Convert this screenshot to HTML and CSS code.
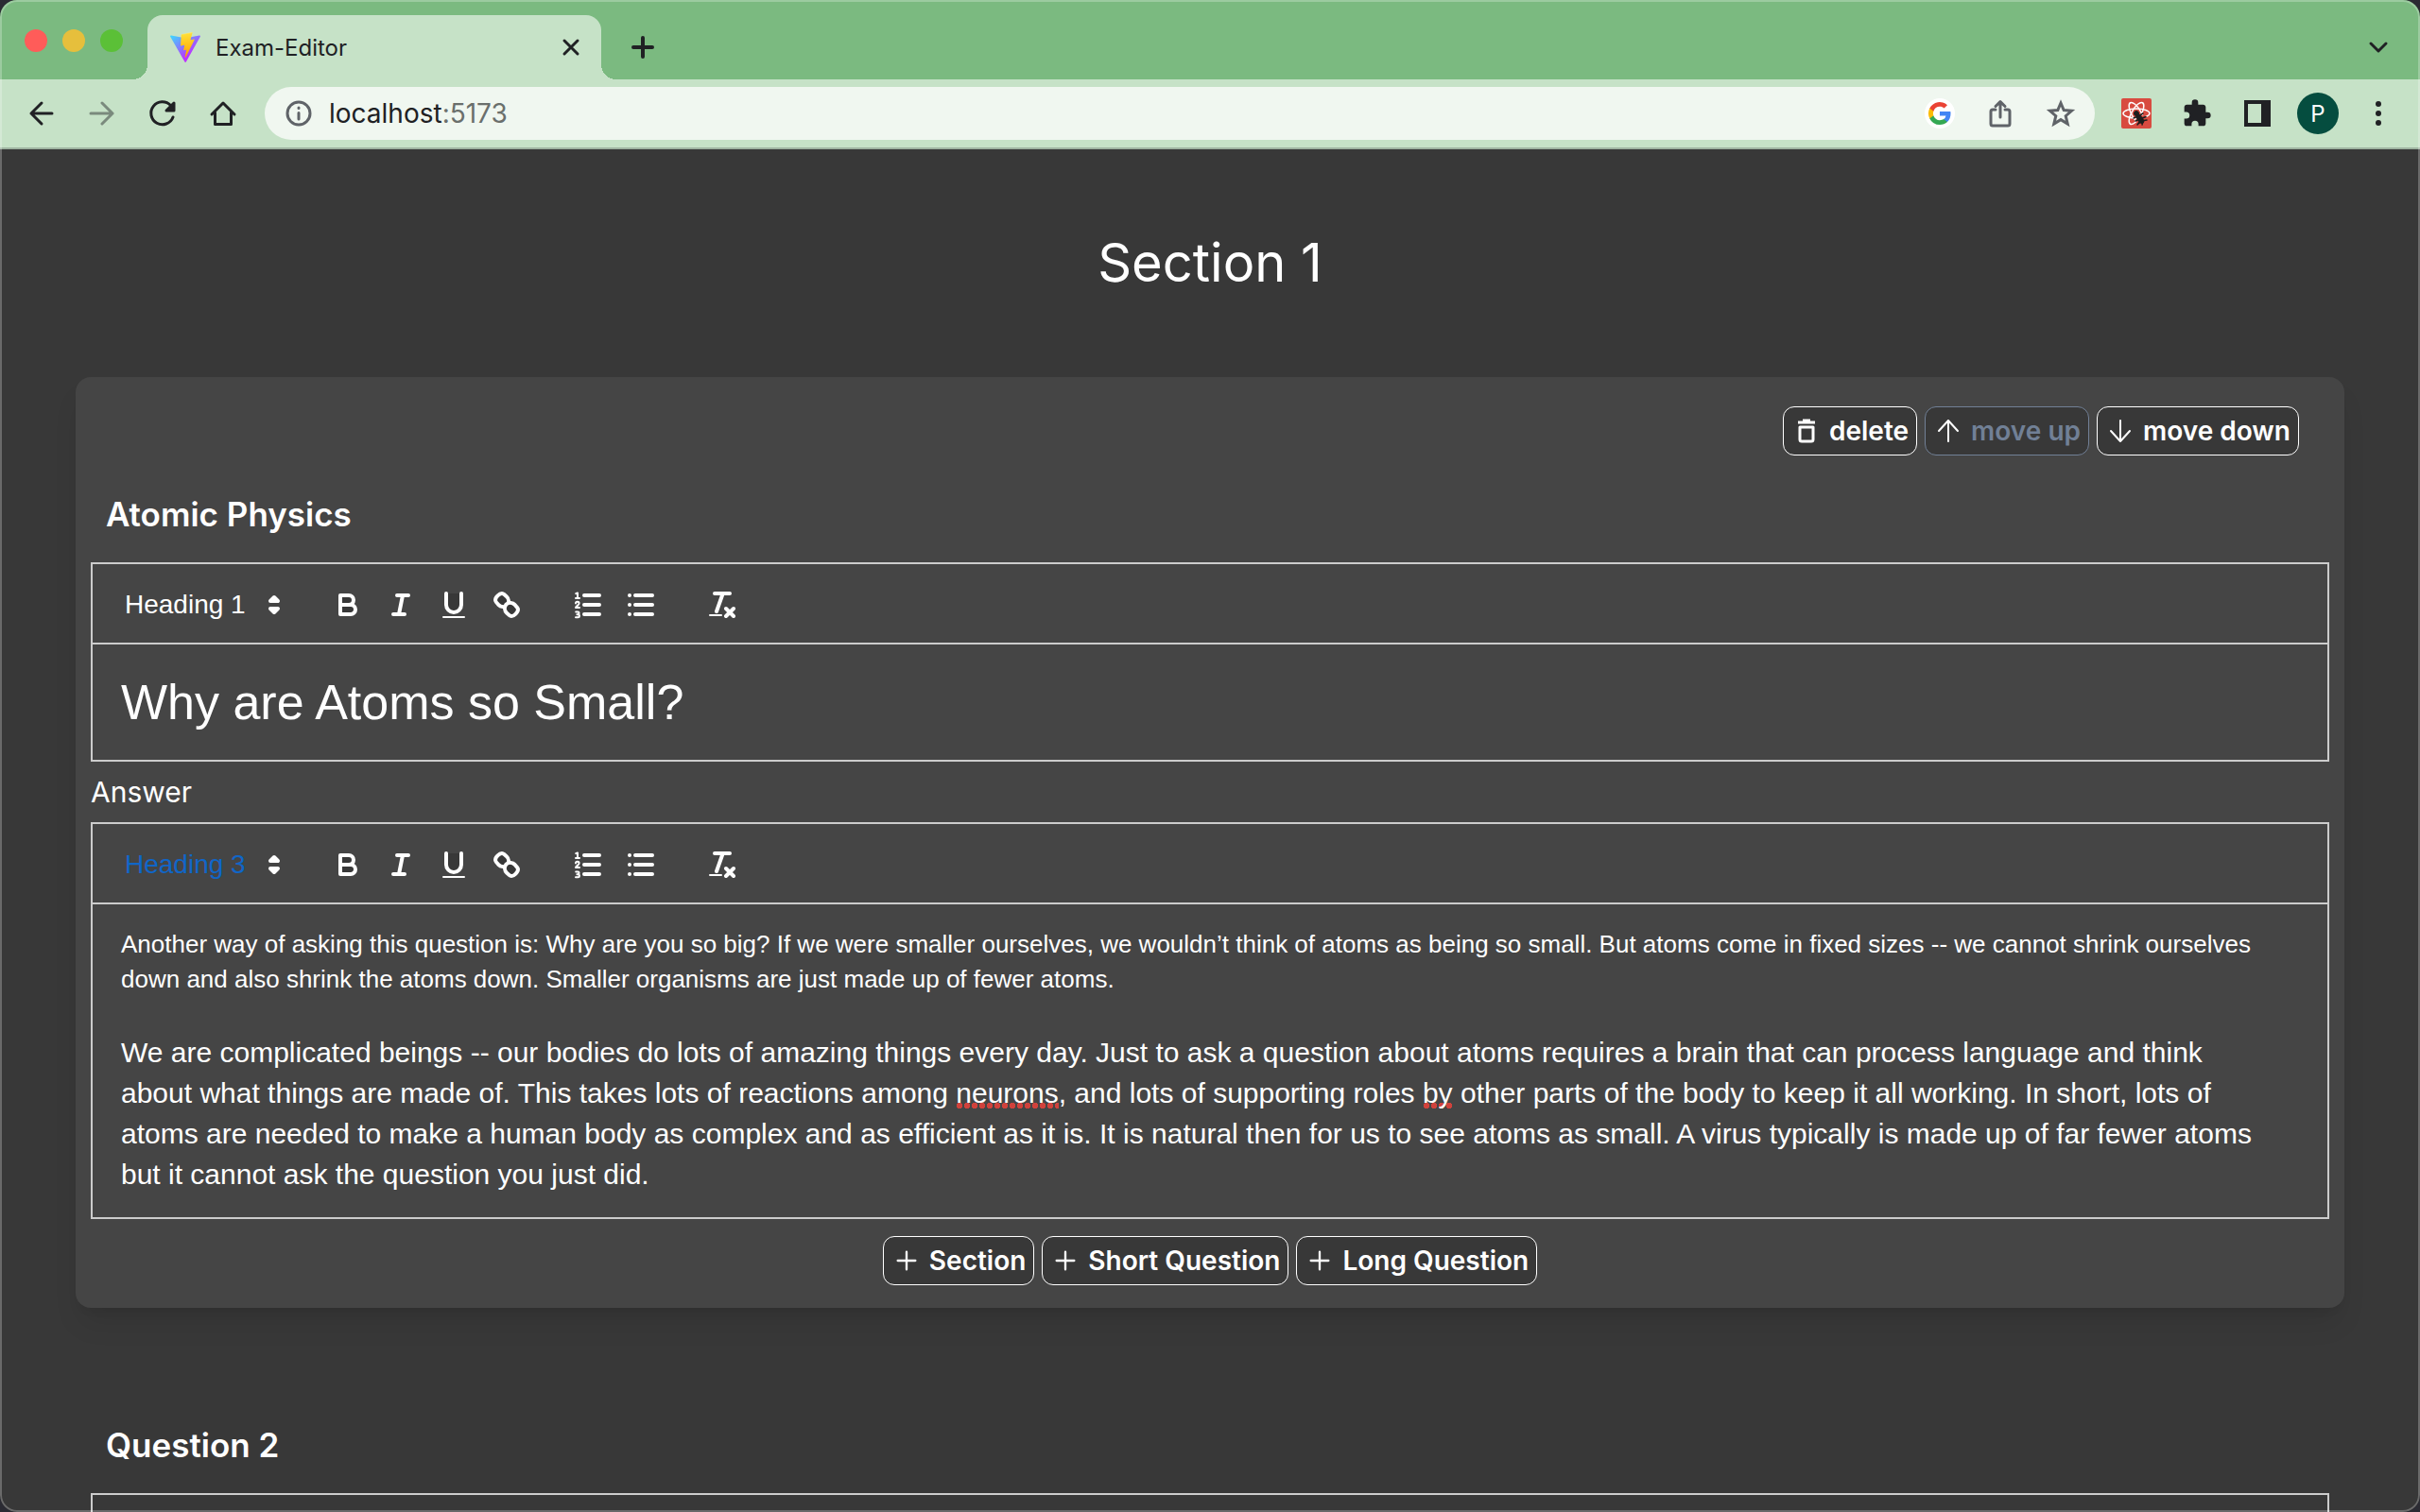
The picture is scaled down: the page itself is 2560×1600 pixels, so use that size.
FILE: index.html
```html
<!DOCTYPE html>
<html lang="en">
<head>
<meta charset="utf-8">
<title>Exam-Editor</title>
<link rel="stylesheet" href="styles.css">
</head>
<body>
<svg class="sprite" aria-hidden="true">
  <symbol id="i-bold" viewBox="0 0 18 18"><path class="dark" d="M5,4H9.5A2.5,2.5,0,0,1,12,6.5v0A2.5,2.5,0,0,1,9.5,9H5A0,0,0,0,1,5,9V4A0,0,0,0,1,5,4Z"/><path class="dark" d="M5,9h5.5A2.5,2.5,0,0,1,13,11.5v0A2.5,2.5,0,0,1,10.5,14H5a0,0,0,0,1,0,0V9A0,0,0,0,1,5,9Z"/></symbol>
  <symbol id="i-italic" viewBox="0 0 18 18"><path d="M7 4H13M5 14H11M8 14L10 4"/></symbol>
  <symbol id="i-underline" viewBox="0 0 18 18"><path class="dark" d="M5,3V9a4.012,4.012,0,0,0,4,4H9a4.012,4.012,0,0,0,4-4V3"/><rect class="bar" height="1" rx=".5" width="12" x="3" y="15"/></symbol>
  <symbol id="i-link" viewBox="0 0 18 18"><path d="M7 7L11 11"/><path class="dark" d="M8.9,4.577a3.476,3.476,0,0,1,.36,4.679A3.476,3.476,0,0,1,4.577,8.9C3.185,7.5,2.035,6.4,4.217,4.217S7.5,3.185,8.9,4.577Z"/><path class="dark" d="M13.423,9.1a3.476,3.476,0,0,0-4.679-.36,3.476,3.476,0,0,0,.36,4.679c1.392,1.392,2.5,2.542,4.679.36S14.815,10.5,13.423,9.1Z"/></symbol>
  <symbol id="i-ol" viewBox="0 0 18 18"><path d="M7 4H15M7 9H15M7 14H15"/><path class="thin" d="M2.5,5.5h2M3.5,5.5V2.7L2.6,3.1M4.5,10.5h-2c0-.6,1.8-1.4,1.8-2.2A.8.8,0,0,0,2.5,8.2M2.6,12.7h1a.7.7,0,0,1,0,1.4H3.2h.5a.7.7,0,0,1,0,1.5H2.5"/></symbol>
  <symbol id="i-ul" viewBox="0 0 18 18"><path d="M6 4H15M6 9H15M6 14H15M3 4H3M3 9H3M3 14H3"/></symbol>
  <symbol id="i-clean" viewBox="0 0 18 18"><path d="M5 3H13M6 12.500L9.350 3M11 11L15 15M15 11L11 15"/><rect class="bar" height="1" rx=".5" width="7" x="2" y="14"/></symbol>
  <symbol id="i-plus" viewBox="0 0 24 24"><path d="M12 4V20M4 12H20"/></symbol>
</svg>

<header class="browser">
  <div class="tabs">
    <div class="lights"><i class="red"></i><i class="yellow"></i><i class="green"></i></div>
    <div class="tab">
      <svg class="vite" viewBox="0 0 256 257"><defs><linearGradient id="va" x1="0" x2=".578" y1=".076" y2=".787"><stop offset="0" stop-color="#41D1FF"/><stop offset="1" stop-color="#BD34FE"/></linearGradient><linearGradient id="vb" x1=".434" x2=".503" y1=".022" y2=".89"><stop offset="0" stop-color="#FFEA83"/><stop offset=".083" stop-color="#FFDD35"/><stop offset="1" stop-color="#FFA800"/></linearGradient></defs><path fill="url(#va)" d="M255.153 37.938L134.897 252.976c-2.483 4.44-8.862 4.466-11.382.048L.875 37.958c-2.746-4.814 1.371-10.646 6.827-9.67l120.385 21.517a6.537 6.537 0 0 0 2.322-.004l117.867-21.483c5.438-.991 9.574 4.796 6.877 9.62Z"/><path fill="url(#vb)" d="M185.432.063L96.44 17.501a3.268 3.268 0 0 0-2.634 3.014l-5.474 92.456a3.268 3.268 0 0 0 3.997 3.378l24.777-5.718c2.318-.535 4.413 1.507 3.936 3.838l-7.361 36.047c-.495 2.426 1.782 4.5 4.151 3.78l15.304-4.649c2.372-.72 4.652 1.36 4.15 3.788l-11.698 56.621c-.732 3.542 3.979 5.473 5.943 2.437l1.313-2.028l72.516-144.72c1.215-2.423-.88-5.186-3.54-4.672l-25.505 4.922c-2.396.462-4.435-1.77-3.759-4.114l16.646-57.705c.677-2.35-1.37-4.583-3.769-4.113Z"/></svg>
      <span class="tab-title">Exam-Editor</span>
      <button class="bare" aria-label="Close tab"><svg class="s20 ink w3" viewBox="0 0 20 20"><path d="M3 3L17 17M17 3L3 17"/></svg></button>
    </div>
    <button class="bare new-tab" aria-label="New tab"><svg class="s28 ink w4" viewBox="0 0 28 28"><path d="M14 4V24M4 14H24"/></svg></button>
    <button class="bare search-tabs" aria-label="Search tabs"><svg class="s28 ink w3" viewBox="0 0 28 28"><path d="M6 10L14 18L22 10"/></svg></button>
  </div>
  <div class="nav">
    <div class="nav-buttons">
      <button class="bare" aria-label="Back"><svg class="s32 ink w3" viewBox="0 0 32 32"><path d="M27 16H5M16 5L5 16L16 27"/></svg></button>
      <button class="bare faded" aria-label="Forward"><svg class="s32 ink w3" viewBox="0 0 32 32"><path d="M4 16H27M16 5L27 16L16 27"/></svg></button>
      <button class="bare" aria-label="Reload"><svg class="s32 ink w3" viewBox="0 0 32 32"><path d="M27 20A12 12 0 1 1 24.500 7.500"/><path class="solid" d="M28 5V13H20Z"/></svg></button>
      <button class="bare" aria-label="Home"><svg class="s32 ink w3" viewBox="0 0 32 32"><path d="M4 17L16 5L28 17M7.500 15V27.500H24.500V15"/></svg></button>
    </div>
    <div class="omnibox">
      <svg class="s32 grey w3" viewBox="0 0 32 32"><circle cx="16" cy="16" r="12"/><path d="M16 15.500V22M16 10V10.500"/></svg>
      <span class="url">localhost<span class="port">:5173</span></span>
      <svg class="s32" viewBox="0 0 32 32"><circle cx="16" cy="16" r="16" fill="#fff"/><g transform="translate(4 4)"><path fill="#4285F4" d="M23.500 12.300c0-.8-.1-1.600-.2-2.300H12v4.500h6.500a5.500 5.500 0 0 1-2.400 3.600v3h3.900c2.300-2.100 3.500-5.200 3.500-8.800z"/><path fill="#34A853" d="M12 24c3.200 0 6-1.100 8-2.900l-3.900-3c-1.100.7-2.500 1.200-4.100 1.200-3.100 0-5.800-2.100-6.700-5H1.300v3.100A12 12 0 0 0 12 24z"/><path fill="#FBBC05" d="M5.300 14.300a7.200 7.200 0 0 1 0-4.600V6.600H1.300a12 12 0 0 0 0 10.800l4-3.100z"/><path fill="#EA4335" d="M12 4.800c1.800 0 3.300.6 4.600 1.800l3.400-3.400A12 12 0 0 0 1.300 6.600l4 3.100c.9-2.900 3.600-4.900 6.700-4.900z"/></g></svg>
      <svg class="s32 grey w3" viewBox="0 0 32 32"><path d="M11 12H8Q6 12 6 14V27Q6 29 8 29H24Q26 29 26 27V14Q26 12 24 12H21M16 20V4M11 8.500L16 3.500L21 8.500"/></svg>
      <svg class="s32 grey w3" viewBox="0 0 32 32"><path class="miter" d="M16 5L19.200 12.600L27.500 13.300L21.200 18.700L23.200 27L16 22.600L8.800 27L10.800 18.700L4.500 13.300L12.800 12.600Z"/></svg>
    </div>
    <div class="extensions">
      <svg class="s32" viewBox="0 0 32 32"><rect width="32" height="32" rx="2" fill="#d84b40"/><g fill="none" stroke="#fff" stroke-width="1.500"><ellipse cx="16" cy="16" rx="14" ry="5"/><ellipse cx="16" cy="16" rx="13" ry="5" transform="rotate(60 16 16)"/><ellipse cx="16" cy="16" rx="13" ry="5" transform="rotate(120 16 16)"/></g><circle cx="22" cy="24" r="6" fill="#d84b40"/><g fill="#1d1d1d" stroke="#1d1d1d"><circle cx="16" cy="16" r="2.500"/><ellipse cx="20" cy="22" rx="2.500" ry="5" transform="rotate(-35 20 22)"/><path d="M13 21L18 19L23 16M15 24L26 19.500M17 28L20 24L27 23M22 28L23 24" stroke-width="1.500"/></g></svg>
      <svg class="s32" viewBox="0 0 24 24"><path fill="#202124" d="M20.500 11H19V7c0-1.100-.9-2-2-2h-4V3.500a2.500 2.500 0 0 0-5 0V5H4c-1.100 0-2 .9-2 2v3.800h1.500a2.700 2.700 0 0 1 0 5.400H2V20c0 1.100.9 2 2 2h3.800v-1.500a2.700 2.700 0 0 1 5.400 0V22H17c1.100 0 2-.9 2-2v-4h1.500a2.500 2.500 0 0 0 0-5z"/></svg>
      <svg class="s32" viewBox="0 0 32 32"><path fill="#202124" fill-rule="evenodd" d="M2 2H30V30H2ZM6 6V26H20V6Z"/></svg>
      <button class="avatar">P</button>
      <svg class="s32" viewBox="0 0 32 32"><g fill="#202124"><circle cx="16" cy="6" r="3"/><circle cx="16" cy="16" r="3"/><circle cx="16" cy="26" r="3"/></g></svg>
    </div>
  </div>
</header>

<main class="page">
  <h1 class="section-title">Section 1</h1>

  <section class="card">
    <div class="actions">
      <button class="btn"><svg class="trash" viewBox="0 0 20 28"><path d="M1 5H19M6 3H14"/><path d="M3 10V23Q3 25 5 25H15Q17 25 17 23V10Z"/></svg>delete</button>
      <button class="btn" disabled><svg class="s28 w2" viewBox="0 0 28 28"><path d="M14 25V3M4 14L14 3L24 14"/></svg>move up</button>
      <button class="btn"><svg class="s28 w2" viewBox="0 0 28 28"><path d="M14 3V25M4 14L14 25L24 14"/></svg>move down</button>
    </div>
    <h2 class="question-title">Atomic Physics</h2>
    <div class="editor">
      <div class="toolbar">
        <button class="picker">Heading 1<svg viewBox="0 0 18 18"><path d="M7 11L9 13L11 11ZM7 7L9 5L11 7Z"/></svg></button>
        <div class="group">
          <button class="tool" aria-label="Bold"><svg><use href="#i-bold"/></svg></button>
          <button class="tool" aria-label="Italic"><svg><use href="#i-italic"/></svg></button>
          <button class="tool" aria-label="Underline"><svg><use href="#i-underline"/></svg></button>
          <button class="tool" aria-label="Link"><svg><use href="#i-link"/></svg></button>
        </div>
        <div class="group">
          <button class="tool" aria-label="Ordered list"><svg><use href="#i-ol"/></svg></button>
          <button class="tool" aria-label="Bullet list"><svg><use href="#i-ul"/></svg></button>
        </div>
        <div class="group">
          <button class="tool" aria-label="Clear formatting"><svg><use href="#i-clean"/></svg></button>
        </div>
      </div>
      <div class="content"><h1>Why are Atoms so Small?</h1></div>
    </div>

    <p class="answer">Answer</p>
    <div class="editor">
      <div class="toolbar">
        <button class="picker active">Heading 3<svg viewBox="0 0 18 18"><path d="M7 11L9 13L11 11ZM7 7L9 5L11 7Z"/></svg></button>
        <div class="group">
          <button class="tool" aria-label="Bold"><svg><use href="#i-bold"/></svg></button>
          <button class="tool" aria-label="Italic"><svg><use href="#i-italic"/></svg></button>
          <button class="tool" aria-label="Underline"><svg><use href="#i-underline"/></svg></button>
          <button class="tool" aria-label="Link"><svg><use href="#i-link"/></svg></button>
        </div>
        <div class="group">
          <button class="tool" aria-label="Ordered list"><svg><use href="#i-ol"/></svg></button>
          <button class="tool" aria-label="Bullet list"><svg><use href="#i-ul"/></svg></button>
        </div>
        <div class="group">
          <button class="tool" aria-label="Clear formatting"><svg><use href="#i-clean"/></svg></button>
        </div>
      </div>
      <div class="content">
        <p>Another way of asking this question is: Why are you so big? If we were smaller ourselves, we wouldn’t think of atoms as being so small. But atoms come in fixed sizes -- we cannot shrink ourselves down and also shrink the atoms down. Smaller organisms are just made up of fewer atoms.</p>
        <p><br></p>
        <h3>We are complicated beings -- our bodies do lots of amazing things every day. Just to ask a question about atoms requires a brain that can process language and think<br>about what things are made of. This takes lots of reactions among <span class="spell">neurons</span>, and lots of supporting roles <span class="spell">by</span> other parts of the body to keep it all working. In short, lots of<br>atoms are needed to make a human body as complex and as efficient as it is. It is natural then for us to see atoms as small. A virus typically is made up of far fewer atoms<br>but it cannot ask the question you just did.</h3>
      </div>
    </div>
    <div class="add-row">
      <button class="btn"><svg class="s28 w2"><use href="#i-plus"/></svg>Section</button>
      <button class="btn"><svg class="s28 w2"><use href="#i-plus"/></svg>Short Question</button>
      <button class="btn"><svg class="s28 w2"><use href="#i-plus"/></svg>Long Question</button>
    </div>
  </section>

  <section class="card next">
    <h2 class="question-title">Question 2</h2>
    <div class="editor"><div class="toolbar"></div></div>
  </section>
</main>
</body>
</html>
```

FILE: styles.css
```css
* { box-sizing: border-box; }
html { background: #2b2b33; height: 100%; }
body {
  margin: 0;
  height: 100%;
  overflow: hidden;
  display: flex;
  flex-direction: column;
  background: #383838;
  border-radius: 18px;
  color: #fff;
  font-family: Inter, "Liberation Sans", sans-serif;
  position: relative;
}
/* hairline round the window, over the page */
body::after {
  content: "";
  position: absolute;
  inset: 0;
  border: 2px solid rgba(255, 255, 255, .25);
  border-radius: 18px;
  pointer-events: none;
}
h1, h2, h3, p { margin: 0; }
button { font: inherit; color: inherit; cursor: pointer; }
svg { display: block; flex: none; fill: none; stroke-linecap: round; stroke-linejoin: round; }
.sprite { position: absolute; width: 0; height: 0; }
.solid { fill: currentColor; }
.miter { stroke-linejoin: miter; }
.s20 { width: 20px; height: 20px; }
.s28 { width: 28px; height: 28px; }
.s32 { width: 32px; height: 32px; }
.w2 { stroke: currentColor; stroke-width: 2; }
.w3 { stroke: currentColor; stroke-width: 3; }
.w4 { stroke: currentColor; stroke-width: 4; }
.ink { color: #202124; }
.grey { color: #5f6368; }
.bare { background: none; border: 0; padding: 0; }

/* browser chrome */
.browser { flex: none; border-bottom: 2px solid #9eb3a0; color: #202124; }
.tabs { height: 84px; background: #7bba80; display: flex; align-items: center; padding: 16px 30px 0 0; }
.lights { align-self: flex-start; display: flex; gap: 16px; width: 156px; padding: 15px 0 0 26px; }
.lights i { width: 24px; height: 24px; border-radius: 50%; }
.red { background: #ff5c59; }
.yellow { background: #e6bf3c; }
.green { background: #5bc037; }
.tab {
  position: relative;
  width: 480px;
  height: 68px;
  border-radius: 16px 16px 0 0;
  background: #c6e2c7;
  display: flex;
  align-items: center;
  padding: 0 22px 0 24px;
}
.tab::before, .tab::after {
  content: "";
  position: absolute;
  bottom: 0;
  width: 16px;
  height: 16px;
}
.tab::before { right: 100%; background: radial-gradient(circle at 0 0, transparent 16px, #c6e2c7 16px); }
.tab::after { left: 100%; background: radial-gradient(circle at 100% 0, transparent 16px, #c6e2c7 16px); }
.vite { width: 32px; height: 32px; }
.tab-title { flex: 1; margin-left: 16px; font-size: 24px; }
.new-tab { margin-left: 30px; }
.search-tabs { margin-left: auto; }
.nav { height: 72px; background: #c6e2c7; display: flex; align-items: center; padding: 0 28px; }
.nav-buttons { display: flex; gap: 32px; width: 252px; }
.faded { opacity: .45; }
.omnibox {
  flex: 1;
  height: 56px;
  border-radius: 28px;
  background: #f0f7f0;
  display: flex;
  align-items: center;
  gap: 32px;
  padding: 0 20px;
}
.url { flex: 1; margin-left: -16px; font-size: 28px; }
.port { color: #6a6f6c; }
.extensions { display: flex; align-items: center; gap: 32px; margin-left: 28px; }
.avatar {
  width: 44px;
  height: 44px;
  margin: 0 -6px;
  padding: 0;
  border: 0;
  border-radius: 50%;
  background: #054d3f;
  color: #fff;
  font-size: 24px;
}

/* exam page */
.page { flex: 1; min-height: 0; padding: 0 80px; }
.section-title { padding: 84px 0 85px; text-align: center; font-size: 56px; font-weight: 400; line-height: 72px; }
.card {
  display: flex;
  flex-direction: column;
  padding: 31px 16px 24px;
  border-radius: 16px;
  background: #454545;
  box-shadow: 0 20px 30px -6px rgba(0, 0, 0, .1), 0 8px 12px -8px rgba(0, 0, 0, .1);
}
.card.next { margin-top: 52px; background: none; box-shadow: none; }
.actions, .add-row { display: flex; gap: 8px; }
.actions { justify-content: flex-end; padding-right: 32px; }
.add-row { justify-content: center; margin-top: 18px; }
.btn {
  display: flex;
  align-items: center;
  gap: 10px;
  height: 52px;
  padding: 0 8px 0 10px;
  border: 1px solid #fff;
  border-radius: 12px;
  background: #383838;
  font-size: 28px;
  font-weight: 600;
}
.btn:disabled { border-color: #718096; color: #718096; }
.btn:disabled svg { color: #fff; }
.trash { width: 20px; height: 28px; margin: 0 4px; stroke: #fff; stroke-width: 3; stroke-linecap: butt; }
.question-title { margin: 34px 0 23px; padding: 0 16px; font-size: 35px; font-weight: 600; line-height: 56px; }
.editor { border: 2px solid #ccc; font-family: "Liberation Sans", Arial, sans-serif; }
.toolbar { display: flex; align-items: center; height: 85px; padding: 2px 16px 0; border-bottom: 2px solid #ccc; }
.picker {
  display: flex;
  align-items: center;
  justify-content: space-between;
  width: 194px;
  margin-right: 32px;
  padding: 0 0 0 18px;
  background: none;
  border: 0;
  font-size: 28px;
}
.picker svg { width: 36px; height: 36px; stroke: #fff; stroke-width: 2; fill: #fff; }
.picker.active { color: #1066c8; }
.group { display: flex; margin-right: 30px; }
.tool { width: 56px; height: 48px; padding: 6px 10px; background: none; border: 0; }
.tool svg { width: 36px; height: 36px; stroke: #fff; stroke-width: 2; }
.dark { fill: #383838; }
.thin { stroke-width: 1; }
.bar { fill: #fff; stroke: none; }
.content { padding: 24px 30px; font-size: 26px; line-height: 37px; }
.content h1 { font-size: 52px; font-weight: 400; line-height: 74px; }
.content h3 { font-size: 30px; font-weight: 400; line-height: 43px; }
.spell { background: radial-gradient(circle, #d0423c 3px, transparent 3px) 0 100% / 8px 6px repeat-x; }
.answer { padding: 12px 0; font-size: 30px; line-height: 40px; }
```
